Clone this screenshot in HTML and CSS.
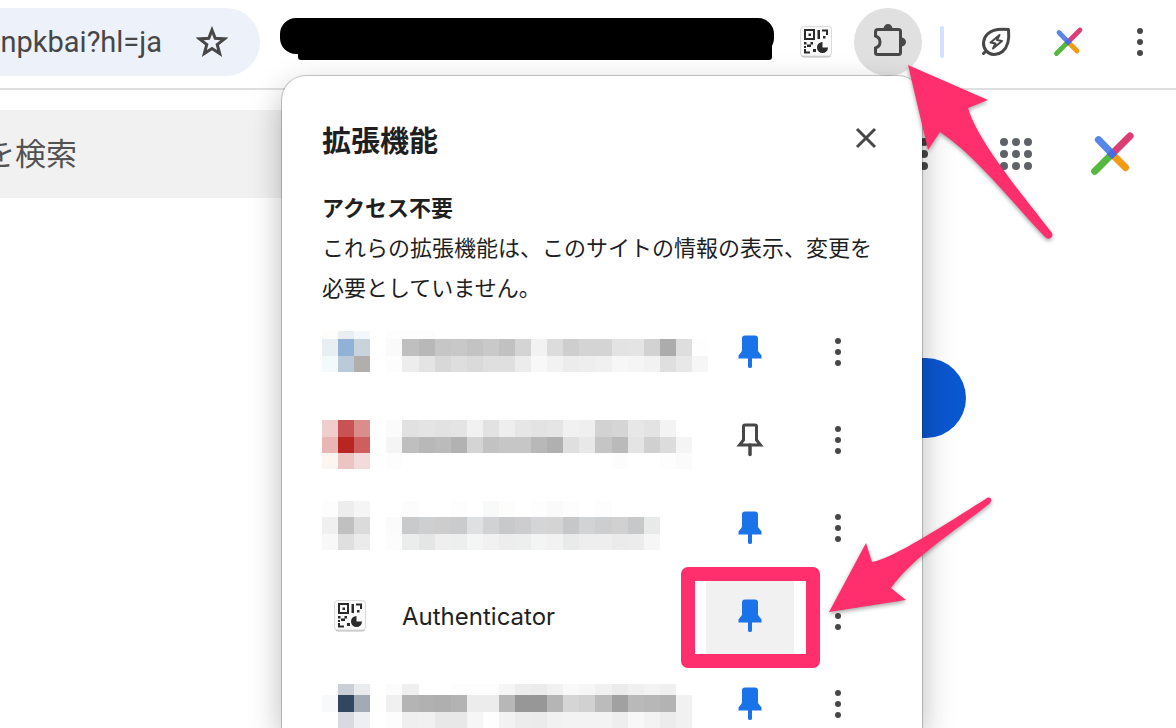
FILE: index.html
```
<!DOCTYPE html>
<html lang="ja">
<head>
    <meta charset="UTF-8">
    <meta name="viewport" content="width=device-width, initial-scale=1.0">
    <title>拡張機能</title>
    <link rel="stylesheet" href="styles.css">
</head>
<body>
    <!-- Icons -->
    <svg class="sprite" aria-hidden="true">
        <symbol id="qr" viewBox="0 0 32 32">
            <rect x="1" y="1.5" width="30" height="30" rx="3" fill="#bdbdbd"/>
            <rect x="0.5" y="0.5" width="31" height="29.5" rx="3" fill="#fafafa" stroke="#dcdcdc"/>
            <g fill="#2b2b2b">
                <path d="M4 3h11v11H4zM6 5v7h7V5z" fill-rule="evenodd"/>
                <path d="M8.5 7.5h2.5v2.5h-2.5zM17.5 4h2.5v9h-2.5zM22 3.5h6V9h-2V5.5h-4zM23 10h2.5v2.5H23z"/>
                <path d="M4 16h2.5v2.5H4zM10.5 16H13v2.5h-2v2.5H7v-2.5h3.5zM4 20h2v2H4zM4 23h2v2.5h4v2H4zM13 23h3v3h-3z"/>
                <path d="M22.5 16v5.5H28A5.500 5.500 0 1 1 22.5 16z"/>
            </g>
        </symbol>
        <symbol id="dots" viewBox="0 0 32 32">
            <circle cx="16" cy="5" r="3"/><circle cx="16" cy="16" r="3"/><circle cx="16" cy="27" r="3"/>
        </symbol>
        <symbol id="pin-on" viewBox="0 0 32 36">
            <path d="M11 1.5h10q3 0 3 3V17l3.5 4.500V24.500H18V32.500q0 1.500-2 1.500T14 32.500V24.500H4.500V21.500L8 17V4.500q0-3 3-3z" fill="#1a73e8"/>
        </symbol>
        <symbol id="pin-off" viewBox="0 0 32 36">
            <path d="M11 3h10q1.5 0 1.5 1.500V18l4 5H5.500l4-5V4.500Q9.500 3 11 3z" fill="none" stroke="#474747" stroke-width="3"/>
            <path d="M16 23v9.500" stroke="#474747" stroke-width="3.5" stroke-linecap="round"/>
        </symbol>
        <symbol id="cross" viewBox="0 0 32 32">
            <g stroke-width="4.8" stroke-linecap="round">
                <path d="M16 16L25 25" stroke="#f59a14"/>
                <path d="M16 16L4.500 27.500" stroke="#55b83f"/>
                <path d="M16 16L28 4" stroke="#dc3d72"/>
                <path d="M7 6.500L15 14.700" stroke="#5687e8"/>
            </g>
            <path d="M16 12.500L19.500 16L16 19.500L12.500 16z" fill="#4a6bdc"/>
        </symbol>
    </svg>

    <!-- Browser toolbar -->
    <header class="toolbar">
        <div class="address">
            <input type="text" value="npkbai?hl=ja" aria-label="アドレス">
            <button class="icon" aria-label="ブックマーク">
                <svg viewBox="0 0 32 32"><path d="M16 4L19.200 12.300L28.500 12.900L21.200 18.500L23.700 27.500L16 22.500L8.300 27.500L10.800 18.500L3.500 12.900L12.800 12.300z" fill="none" stroke="#474747" stroke-width="3"/></svg>
            </button>
        </div>
        <div class="redacted"></div>
        <button class="icon" aria-label="Authenticator"><svg><use href="#qr"/></svg></button>
        <button class="icon extensions" aria-label="拡張機能">
            <svg viewBox="0 0 32 32">
                <path d="M4 5.5H24.5Q26.5 5.500 26.5 7.500V28.500Q26.500 30.500 24.500 30.500H3.500Q1.500 30.500 1.500 28.500V24Q6 22.500 6 18T1.500 12V8Q1.500 5.500 4 5.500z" fill="none" stroke="#474747" stroke-width="3"/>
                <path d="M9.500 5a4.500 5 0 0 1 9 0zM27 13.500a5 4.500 0 0 1 0 9z" fill="#474747"/>
            </svg>
        </button>
        <span class="divider"></span>
        <button class="icon saver" aria-label="省エネ">
            <svg viewBox="0 0 32 32">
                <g fill="none" stroke="#474747" stroke-linejoin="round" stroke-linecap="round">
                    <path d="M28.500 3.500C19 2.500 12 3.500 7.500 8S2 19.500 6 24.500S17 30 22.500 25.500S29.500 13 28.500 3.500zM6 25L3.500 27.500" stroke-width="3"/>
                    <path d="M19.500 9L10.500 16.500L15.500 17.500L13 22.500L22 15L17 14z" stroke-width="2"/>
                </g>
            </svg>
        </button>
        <button class="icon" aria-label="プロフィール"><svg><use href="#cross"/></svg></button>
        <button class="icon" aria-label="メニュー"><svg><use href="#dots"/></svg></button>
    </header>

    <!-- Page behind the popup -->
    <main class="page">
        <div class="searchbar">
            <input type="search" placeholder="を検索" aria-label="検索">
            <button class="icon" aria-label="その他">
                <svg viewBox="0 0 32 32"><circle cx="16" cy="4" r="4"/><circle cx="16" cy="16" r="4"/><circle cx="16" cy="28" r="4"/></svg>
            </button>
            <button class="icon apps" aria-label="アプリ">
                <svg viewBox="0 0 32 32">
                    <circle cx="4" cy="4" r="4"/><circle cx="16" cy="4" r="4"/><circle cx="28" cy="4" r="4"/>
                    <circle cx="4" cy="16" r="4"/><circle cx="16" cy="16" r="4"/><circle cx="28" cy="16" r="4"/>
                    <circle cx="4" cy="28" r="4"/><circle cx="16" cy="28" r="4"/><circle cx="28" cy="28" r="4"/>
                </svg>
            </button>
            <button class="icon account" aria-label="アカウント"><svg><use href="#cross"/></svg></button>
        </div>
        <button class="add" aria-label="追加"></button>
    </main>

    <!-- Extensions popup -->
    <section class="popup">
        <div class="popup-head">
            <h1>拡張機能</h1>
            <button class="icon" aria-label="閉じる">
                <svg viewBox="0 0 32 32"><path d="M7 7L25 25M25 7L7 25" stroke="#474747" stroke-width="3"/></svg>
            </button>
        </div>
        <h2>アクセス不要</h2>
        <p>これらの拡張機能は、このサイトの情報の表示、変更を必要としていません。</p>
        <ul class="list">
            <li>
                <div class="name"><svg class="mosaic" data-row="0"></svg></div>
                <button class="pin" aria-label="固定"><svg><use href="#pin-on"/></svg></button>
                <button class="more" aria-label="その他"><svg><use href="#dots"/></svg></button>
            </li>
            <li>
                <div class="name"><svg class="mosaic" data-row="1"></svg></div>
                <button class="pin" aria-label="固定"><svg><use href="#pin-off"/></svg></button>
                <button class="more" aria-label="その他"><svg><use href="#dots"/></svg></button>
            </li>
            <li>
                <div class="name"><svg class="mosaic" data-row="2"></svg></div>
                <button class="pin" aria-label="固定"><svg><use href="#pin-on"/></svg></button>
                <button class="more" aria-label="その他"><svg><use href="#dots"/></svg></button>
            </li>
            <li>
                <div class="name"><svg class="logo"><use href="#qr"/></svg>Authenticator</div>
                <button class="pin marked" aria-label="固定"><svg><use href="#pin-on"/></svg></button>
                <button class="more" aria-label="その他"><svg><use href="#dots"/></svg></button>
            </li>
            <li>
                <div class="name"><svg class="mosaic" data-row="3"></svg></div>
                <button class="pin" aria-label="固定"><svg><use href="#pin-on"/></svg></button>
                <button class="more" aria-label="その他"><svg><use href="#dots"/></svg></button>
            </li>
        </ul>
    </section>

    <!-- Arrows -->
    <svg class="arrow arrow-top" viewBox="0 0 160 184">
        <path d="M8 5L88 40L68 48C78 82 122 134 152 173C154 177 149 181 145 177C108 138 76 96 40 72L28 90z"/>
    </svg>
    <svg class="arrow arrow-pin" viewBox="0 0 180 130">
        <path d="M9 122L46 53L52 72C74 68 126 34 167 8C171 6 173 11 169 14C134 42 92 68 71 98L86 110z"/>
    </svg>

    <script src="script.js"></script>
</body>
</html>
```
FILE: styles.css
```
* {
    box-sizing: border-box;
}
body {
    margin: 0;
    height: 100vh;
    overflow: hidden;
    position: relative;
    background: #fff;
    color: #1f1f1f;
    font-family: Inter, "Noto Sans CJK JP", sans-serif;
}
button {
    border: none;
    background: none;
    padding: 0;
    cursor: pointer;
}
input {
    border: none;
    background: none;
    outline: none;
    padding: 0;
    min-width: 0;
}
svg {
    display: block;
    fill: #474747;
}
.sprite {
    position: absolute;
    width: 0;
    height: 0;
}
.icon {
    flex: none;
    width: 32px;
    height: 32px;
}
.icon svg {
    width: 100%;
    height: 100%;
}

/* Toolbar */
.toolbar {
    display: flex;
    align-items: center;
    height: 90px;
    padding: 8px 20px 12px 0;
    border-bottom: 2px solid #dfdfdf;
}
.address {
    flex: 1;
    min-width: 0;
    display: flex;
    align-items: center;
    gap: 34px;
    height: 68px;
    padding-right: 32px;
    border-radius: 0 34px 34px 0;
    background: #ecf1fa;
}
.address input {
    flex: 1;
    height: 40px;
    text-align: right;
    font-family: Roboto, sans-serif;
    font-size: 29px;
    color: #474747;
}
.redacted {
    position: relative;
    flex: none;
    width: 494px;
    height: 36px;
    margin: 0 26px 12px 20px;
    border-radius: 16px;
    background: #000;
}
.redacted::after {
    content: "";
    position: absolute;
    left: 18px;
    right: 2px;
    top: 20px;
    height: 22px;
    border-radius: 0 0 3px 3px;
    background: #000;
}
.extensions {
    width: 68px;
    height: 68px;
    margin-left: 22px;
    padding: 16px 16px 20px 20px;
    border-radius: 50%;
    background: #e0e0e0;
}
.divider {
    width: 4px;
    height: 32px;
    margin: 0 36px 0 18px;
    border-radius: 2px;
    background: #d3e3fd;
}
.saver ~ .icon {
    margin-left: 40px;
}

/* Page */
.page {
    padding-top: 20px;
}
.searchbar {
    display: flex;
    align-items: center;
    padding-right: 40px;
}
.searchbar input {
    flex: 1;
    height: 88px;
    margin-right: 8px;
    padding-bottom: 6px;
    background: #f1f1f1;
    font-family: "Noto Sans CJK JP", sans-serif;
    font-size: 31px;
    text-indent: -16px;
}
.searchbar input::placeholder {
    color: #525252;
}
.apps {
    margin: 0 56px 0 60px;
}
.apps svg {
    fill: #5f6368;
}
.account {
    width: 48px;
    height: 48px;
}
.add {
    display: block;
    width: 160px;
    height: 80px;
    margin: 160px 210px 0 auto;
    border-radius: 40px;
    background: #0b57d0;
}

/* Popup */
.popup {
    position: absolute;
    top: 76px;
    bottom: 0;
    right: 254px;
    width: 640px;
    padding: 40px 40px 0;
    border-radius: 24px 24px 0 0;
    background: #fff;
    box-shadow: 0 0 0 1px rgba(0,0,0,0.2), 0 12px 32px rgba(0,0,0,0.28);
    overflow: hidden;
}
.popup-head {
    display: flex;
    justify-content: space-between;
    height: 72px;
}
.popup-head .icon {
    margin-top: 6px;
}
h1 {
    margin: 0;
    font-size: 29px;
    line-height: 52px;
}
h2 {
    margin: 0;
    font-size: 22px;
    line-height: 40px;
}
p {
    margin: 0;
    font-size: 22px;
    line-height: 40px;
}
.list {
    list-style: none;
    margin: 0;
    padding: 0;
}
.list li {
    display: flex;
    height: 88px;
}
.name {
    flex: 1;
    min-width: 0;
    display: flex;
    align-items: center;
    font-size: 24px;
}
.logo {
    width: 32px;
    height: 32px;
    margin: 0 36px 0 12px;
}
.mosaic {
    flex: none;
    width: 386px;
    height: 88px;
}
.pin, .more {
    display: flex;
    align-items: center;
    justify-content: center;
    width: 88px;
}
.pin svg {
    width: 32px;
    height: 36px;
}
.more svg {
    width: 32px;
    height: 32px;
}
.marked {
    position: relative;
    background: #f1f1f1;
}
.marked::after {
    content: "";
    position: absolute;
    top: -5px;
    right: -26px;
    bottom: -8px;
    left: -25px;
    border: 14px solid #ff2f6d;
    border-radius: 7px;
}

/* Arrows */
.arrow {
    position: absolute;
    fill: #ff2f6d;
    filter: drop-shadow(0 2px 2px rgba(0,0,0,0.35));
    pointer-events: none;
}
.arrow-top {
    top: 60px;
    right: 116px;
    width: 160px;
    height: 184px;
}
.arrow-pin {
    top: 490px;
    right: 176px;
    width: 180px;
    height: 130px;
}
```
FILE: script.js
```
// Masked extension names: each band is [top, height, cell colours from left to right]
const mosaics = [
    [
        [23, 8, 'fffdfb e9eef2 f2f8fc - fdfdfd fdfdfd fdfdfd'],
        [31, 17, 'e8eef2 90b2d6 c9d3dc - fafafa bfbfbf b8b8b8 c6c6c6 c8c8c8 c3c3c3 c9c9c9 c1c1c1 d4d4d4 f2f2f2 dcdcdc cecece d4d4d4 d4d4d4 e3e3e3 e4e4e4 d2d2d2 acacac dedede fefefe'],
        [48, 16, 'f4f9fc bbcad8 b0afac - fdfdfd ededed e4e4e4 d8d8d8 dedede dadada dfdfdf dfdfdf ececec f8f8f8 f2f2f2 ececec eeeeee f0f0f0 f7f7f7 f5f5f5 f2f2f2 dfdfdf e8e8e8 f6f6f6']
    ],
    [
        [24, 17, 'f1cece c95352 d98e8c - fbfbfb e1e1e1 e4e4e4 e2e2e2 e4e4e4 f1f1f1 e2e2e2 eeeeee e6e6e6 e3e3e3 e5e5e5 f1f1f1 efefef d2d2d2 d5d5d5 e7e7e7 e3e3e3 f3f3f3'],
        [41, 16, 'e9b5b5 b92521 cd605e - f5f5f5 bfbfbf b8b8b8 bbbbbb b2b2b2 d4d4d4 c2c2c2 c6c6c6 c6c6c6 b8b8b8 b0b0b0 dfdfdf e8e8e8 c5c5c5 bababa e4e4e4 d0d0d0 dcdcdc f5f5f5'],
        [57, 16, 'fcf6f3 ecc4c3 f4dbdb - fdfdfd - - - - - - - - - - - - - fcfcfc - - fdfdfd fbfbfb']
    ],
    [
        [17, 16, 'fdfdfd ededed f5f5f5 - - fcfcfc - - fdfdfd - f8faf9 fdfdfb - fdfdfd fafafa fdfdfd - fdfdfd'],
        [33, 17, 'f0f0f0 c0c0c0 dbdbdb - fbfbfb c9cacb cecfd0 cdcdcd cacbcc dfe0e1 d1d2d3 c8c9ca cdcdcf d4d5d6 d4d4d4 c6c7c8 d2d3d4 cdcecf d1d1d2 c7c8c9 e8eae9'],
        [50, 16, 'f8f8f8 dfdfdf ebebeb - fcfcfc ebedec e3e6e4 efefef edefee f3f6f5 f1f1f1 ededed edefee f2f5f4 f2f2f2 e9ebea eeeeee eeeeee ebebeb ececec f6f6f6']
    ],
    [
        [24, 11, '- c9ced7 e9ebef - fcfcfc efefef - - fdfdfd fdfdfd fdfdfd f5f5f5 ededed ebebeb f1f1f1 f9f9f9 f6f6f6 f1f1f1 ebebeb f0f0f0 f3f3f3 f0f0f0'],
        [35, 17, 'f8f9fa 30475f a1aab5 - f0f0f0 b4b4b4 b1b1b1 afafaf b3b3b3 ececec ececec b7b7b7 979797 979797 b5b5b5 d5d5d5 d1d1d1 bbbbbb a1a1a1 b9b9b9 b7b7b7 b3b3b3 f1f1f1'],
        [52, 16, '- d7dae0 eeeff2 - fdfdfd efefef f1f1f1 e8e8e8 e8e8e8 f6f6f6 fefefe f2f2f2 ececec ebebeb f1f1f1 f3f3f3 f3f3f3 f3f3f3 eeeeee f8f8f8 f3f3f3 ececec f1f1f1']
    ]
];

document.querySelectorAll('.mosaic').forEach(svg => {
    svg.setAttribute('viewBox', '0 0 384 88');
    svg.setAttribute('preserveAspectRatio', 'none');
    svg.setAttribute('shape-rendering', 'crispEdges');
    let cells = '';
    mosaics[svg.dataset.row].forEach(([top, height, colours]) => {
        colours.split(' ').forEach((colour, i) => {
            if (colour !== '-') {
                cells += `<rect x="${i * 16}" y="${top}" width="16" height="${height}" fill="#${colour}"/>`;
            }
        });
    });
    svg.innerHTML = cells;
});
```
